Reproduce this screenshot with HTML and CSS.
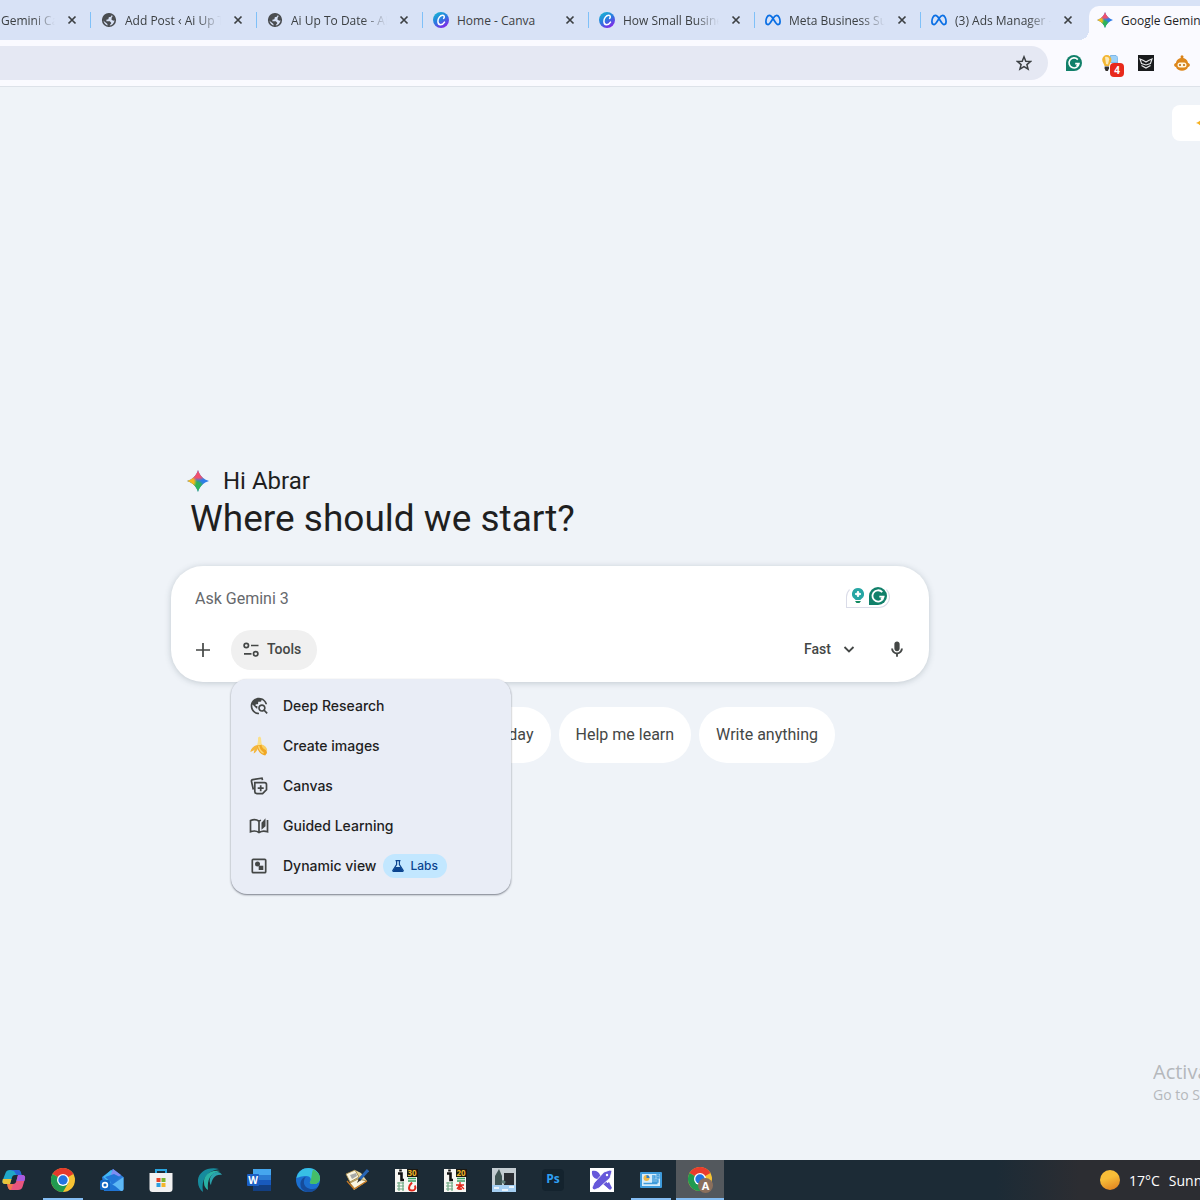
FILE: index.html
```html
<!DOCTYPE html>
<html lang="en">
<head>
    <meta charset="UTF-8">
    <title>Google Gemini</title>
    <link rel="stylesheet" href="styles.css">
</head>
<body>
<!-- shared icons -->
<svg class="sprite" width="0" height="0" aria-hidden="true">
    <defs>
        <linearGradient id="canva-fill" x1="0" y1="0" x2="0.6" y2="1">
            <stop offset="0" stop-color="#15c0cf"/>
            <stop offset="0.55" stop-color="#2a7be0"/>
            <stop offset="1" stop-color="#7d2ae8"/>
        </linearGradient>
        <radialGradient id="spark-red" cx="0.5" cy="0" r="0.5">
            <stop offset="0.7" stop-color="#f0506e"/>
            <stop offset="1" stop-color="#f0506e" stop-opacity="0"/>
        </radialGradient>
        <radialGradient id="spark-yellow" cx="0" cy="0.5" r="0.45">
            <stop offset="0.7" stop-color="#f6b81f"/>
            <stop offset="1" stop-color="#f6b81f" stop-opacity="0"/>
        </radialGradient>
        <radialGradient id="spark-green" cx="0.35" cy="0.9" r="0.5">
            <stop offset="0.7" stop-color="#2fb35a"/>
            <stop offset="1" stop-color="#2fb35a" stop-opacity="0"/>
        </radialGradient>
        <clipPath id="spark-clip">
            <path d="M12 0c1.6 5.800 6.200 10.400 12 12-5.800 1.600-10.400 6.200-12 12-1.600-5.800-6.200-10.400-12-12 5.800-1.600 10.400-6.200 12-12z"/>
        </clipPath>
    </defs>
    <symbol id="close" viewBox="0 0 10 10">
        <path d="M1.5 1.5l7 7M8.500 1.500l-7 7" stroke="#3c4043" stroke-width="1.7" fill="none"/>
    </symbol>
    <symbol id="globe" viewBox="0 0 16 16">
        <circle cx="8" cy="8" r="6.3" fill="#d8e2f6" stroke="#4a4d51" stroke-width="1.6"/>
        <path d="M1.500 8C2 4 5 1.500 9 1.500l1.800 1.500-1 1.800-2 .4-.4 2-2 .6v1.400h3.400l1.600 1.800-1.200 1.400-1 2.600-1.400-.4-.4-2.600-2.400-2z" fill="#4a4d51"/>
        <path d="M11 4.500l2.400-.4 1.200 3.900-2.400.8-1.800-1.400z" fill="#4a4d51"/>
    </symbol>
    <symbol id="canva" viewBox="0 0 16 16">
        <circle cx="8" cy="8" r="8" fill="url(#canva-fill)"/>
        <path d="M10.600 6.400c1-.8 1-3-.8-3.100-2.600-.1-4.900 3-4.900 6 0 2.200 1 3.500 2.600 3.500 1.500 0 3-1 4-2.700" fill="none" stroke="#fff" stroke-width="1.500" stroke-linecap="round"/>
    </symbol>
    <symbol id="meta" viewBox="0 0 16 16">
        <path d="M8 6.500C6.900 4.500 5.700 3.300 4.400 3.300 2.300 3.300.9 6.500.9 9.600c0 1.900.7 3 2 3 1.700 0 2.900-2.500 5.100-6.100 1.100-1.900 2.200-3.200 3.600-3.200 2.100 0 3.500 3.200 3.500 6.300 0 1.900-.7 3-2 3-1.700 0-2.900-2.500-5.100-6.100z" fill="none" stroke="#0a6fe4" stroke-width="1.700"/>
    </symbol>
    <symbol id="spark" viewBox="0 0 24 24">
        <g clip-path="url(#spark-clip)">
            <rect width="24" height="24" fill="#2f7de8"/>
            <rect width="24" height="24" fill="url(#spark-green)"/>
            <rect width="24" height="24" fill="url(#spark-yellow)"/>
            <rect width="24" height="24" fill="url(#spark-red)"/>
        </g>
    </symbol>
    <symbol id="grammarly" viewBox="0 0 16 16">
        <path d="M8 0a8 8 0 1 1 0 16H0V8a8 8 0 0 1 8-8z" fill="#11806a"/>
        <path d="M11.800 4.600A5 5 0 1 0 13 8.600H9.200M13 8.600l-2.400 2.600" fill="none" stroke="#fff" stroke-width="1.600"/>
    </symbol>
</svg>

<header class="browser">
    <nav class="tabs" aria-label="Tabs">
        <div class="tab tab-cut">
            <span class="tab-title">Gemini Canvas</span>
            <button class="tab-close" aria-label="Close tab"><svg><use href="#close"/></svg></button>
        </div>
        <div class="tab">
            <svg class="favicon"><use href="#globe"/></svg>
            <span class="tab-title">Add Post ‹ Ai Up To Date</span>
            <button class="tab-close" aria-label="Close tab"><svg><use href="#close"/></svg></button>
        </div>
        <div class="tab">
            <svg class="favicon"><use href="#globe"/></svg>
            <span class="tab-title">Ai Up To Date - AI News</span>
            <button class="tab-close" aria-label="Close tab"><svg><use href="#close"/></svg></button>
        </div>
        <div class="tab">
            <svg class="favicon"><use href="#canva"/></svg>
            <span class="tab-title tab-title-full">Home - Canva</span>
            <button class="tab-close" aria-label="Close tab"><svg><use href="#close"/></svg></button>
        </div>
        <div class="tab">
            <svg class="favicon"><use href="#canva"/></svg>
            <span class="tab-title">How Small Businesses</span>
            <button class="tab-close" aria-label="Close tab"><svg><use href="#close"/></svg></button>
        </div>
        <div class="tab">
            <svg class="favicon"><use href="#meta"/></svg>
            <span class="tab-title">Meta Business Suite</span>
            <button class="tab-close" aria-label="Close tab"><svg><use href="#close"/></svg></button>
        </div>
        <div class="tab tab-last">
            <svg class="favicon"><use href="#meta"/></svg>
            <span class="tab-title">(3) Ads Manager - Ads</span>
            <button class="tab-close" aria-label="Close tab"><svg><use href="#close"/></svg></button>
        </div>
        <div class="tab-active">
            <svg class="favicon"><use href="#spark"/></svg>
            <span>Google Gemini</span>
        </div>
    </nav>
    <div class="toolbar">
        <div class="address">
            <input class="address-input" type="text" aria-label="Address">
            <button class="icon-btn" aria-label="Bookmark this tab">
                <svg width="16" height="16" viewBox="0 0 16 16"><path d="M8 1.800l1.800 4.400 4.700.3-3.600 3.100 1.200 4.600L8 11.700l-4.100 2.500 1.200-4.600L1.500 6.500l4.700-.3z" fill="none" stroke="#3c4043" stroke-width="1.500"/></svg>
            </button>
        </div>
        <div class="extensions">
            <button class="icon-btn" aria-label="Grammarly"><svg width="16" height="16"><use href="#grammarly"/></svg></button>
            <button class="icon-btn" aria-label="Ideas, 4 new">
                <svg width="16" height="16" viewBox="0 0 16 16">
                    <path d="M8.500.5H14l2 2v5H8.500z" fill="#9dd0f7" stroke="#5ba3e0" stroke-width=".7"/>
                    <path d="M4.800 0a4.600 4.600 0 0 0-4.600 4.700c0 2.700 2 3.800 2.300 6.300h4.600c.3-2.500 2.300-3.600 2.300-6.300A4.600 4.600 0 0 0 4.800 0z" fill="#f3b632"/>
                    <path d="M3 2.200c1.500-.9 4 0 4.200 2L6 9.500 4 9z" fill="#fbe9b8"/>
                    <path d="M2.600 11.500h4.400v2L5.900 16H3.700l-1.100-2.500z" fill="#34322f"/>
                </svg>
                <span class="badge">4</span>
            </button>
            <button class="icon-btn" aria-label="Owl">
                <svg width="16" height="16" viewBox="0 0 16 16">
                    <rect width="16" height="16" fill="#191b1d"/>
                    <path d="M2 4l3.500 1.500L8 7l2.500-1.500L14 4l-1.500 4.500L8 10 3.500 8.500z" fill="none" stroke="#e6e8ea" stroke-width="1.100"/>
                    <path d="M3.500 10.500L8 13l4.500-2.500" fill="none" stroke="#e6e8ea" stroke-width="1.200"/>
                </svg>
            </button>
            <button class="icon-btn" aria-label="Robot">
                <svg width="16" height="16" viewBox="0 0 16 16">
                    <circle cx="8" cy="1.800" r="1.500" fill="#d98218"/>
                    <path d="M2 8C2.500 4.500 5 3 8 3s5.500 1.500 6 5c2.500.5 2.500 3.500 0 4-1.500 5-10.500 5-12 0-2.500-.5-2.500-3.500 0-4z" fill="#dd871c"/>
                    <rect x="3.500" y="7.500" width="9" height="5" rx="2.500" fill="#fff6e0"/>
                    <circle cx="6" cy="10" r="1.100" fill="#c06f10"/><circle cx="10" cy="10" r="1.100" fill="#c06f10"/>
                </svg>
            </button>
        </div>
    </div>
</header>

<main class="page">
    <div class="page-top">
        <a class="upgrade" href="#" aria-label="Upgrade">
            <svg width="14" height="14" viewBox="0 0 24 24"><path d="M12 0c1.600 5.800 6.200 10.400 12 12-5.800 1.600-10.400 6.200-12 12-1.600-5.800-6.200-10.400-12-12 5.800-1.600 10.400-6.200 12-12z" fill="#f6b01e"/></svg>
        </a>
    </div>

    <div class="chat">
        <div class="greeting">
            <svg width="22" height="22"><use href="#spark"/></svg>
            <span>Hi Abrar</span>
        </div>
        <h1 class="title">Where should we start?</h1>

        <form class="prompt">
            <div class="prompt-row">
                <input class="prompt-input" type="text" placeholder="Ask Gemini 3" aria-label="Ask Gemini 3">
                <div class="writing-tools">
                    <svg width="12" height="16" viewBox="0 0 12 16">
                        <path d="M6 0a6 6 0 0 1 3.600 10.800L8.300 12H3.700l-1.300-1.200A6 6 0 0 1 6 0z" fill="#27a6a4"/>
                        <path d="M6 3l.9 2.100L9 6l-2.100.9L6 9l-.9-2.100L3 6l2.100-.9z" fill="#fff" stroke="#fff"/>
                        <path d="M3 13h6l-1.500 2h-3z" fill="#138a60"/>
                    </svg>
                    <svg width="18" height="18"><use href="#grammarly"/></svg>
                </div>
            </div>
            <div class="prompt-row">
                <button type="button" class="round-btn" aria-label="Add files">
                    <svg width="16" height="16" viewBox="0 0 16 16"><path d="M8 1v14M1 8h14" stroke="#444746" stroke-width="1.700"/></svg>
                </button>
                <div class="tools">
                    <button type="button" class="tools-btn" aria-expanded="true">
                        <svg width="16" height="16" viewBox="0 0 16 16" fill="none" stroke="#444746" stroke-width="1.700">
                            <circle cx="3.300" cy="3.500" r="2.200"/><path d="M8 3.500h7.500M1 11.800h7.500"/><circle cx="12.700" cy="11.800" r="2.200"/>
                        </svg>
                        <span class="label">Tools</span>
                    </button>
                    <div class="menu" role="menu">
                        <button type="button" class="menu-item" role="menuitem">
                            <svg width="20" height="20" viewBox="0 0 24 24"><path fill="#444746" d="M19.300 16.900c.4-.7.7-1.500.7-2.400 0-2.500-2-4.500-4.500-4.500S11 12 11 14.500s2 4.500 4.500 4.500c.9 0 1.700-.3 2.400-.7l3.200 3.200 1.400-1.400-3.200-3.200zm-3.800.1c-1.400 0-2.500-1.100-2.500-2.500s1.100-2.500 2.500-2.500 2.500 1.100 2.500 2.500-1.100 2.500-2.500 2.500zM12 20v2C6.480 22 2 17.520 2 12S6.480 2 12 2c4.840 0 8.870 3.440 9.800 8h-2.070c-.64-2.460-2.400-4.470-4.730-5.410V5c0 1.100-.9 2-2 2h-2v2c0 .55-.45 1-1 1H8v2h2v3H9l-4.790-4.790C4.080 10.790 4 11.380 4 12c0 4.410 3.590 8 8 8z"/></svg>
                            <span class="label">Deep Research</span>
                        </button>
                        <button type="button" class="menu-item" role="menuitem">
                            <svg width="20" height="20" viewBox="0 0 20 20">
                                <path d="M9 1.500L11 .5l1 1.500c.2 3 .6 5.500 1 8l-5.500 1c1-3 1.800-6 1.500-9.500z" fill="#fbe08a"/>
                                <path d="M8.200 9C5.500 9.500 2 12 1.300 16c1.700-.4 3-1.200 4.200-2.500L4.600 17.500c2-1 3.400-2.700 4.200-5z" fill="#f4b63c"/>
                                <path d="M8 9.500c0 5 3.500 9 8.200 10l1.800-2.400c0-3.500-2-6.200-5-8.400z" fill="#f0a725"/>
                                <path d="M12.500 8.500c3.200.6 5.300 2.500 5.800 6-2.200-.3-4-1.500-5.500-4z" fill="#f9cf62"/>
                                <path d="M9.600 10c.6 3 2.400 5.600 5 7.200" fill="none" stroke="#fbd873" stroke-width="1.300"/>
                            </svg>
                            <span class="label">Create images</span>
                        </button>
                        <button type="button" class="menu-item" role="menuitem">
                            <svg width="20" height="20" viewBox="0 0 20 20" fill="none" stroke="#444746" stroke-width="1.700">
                                <path d="M5.800 6.700h9.700a2 2 0 0 1 2 2v5l-3.900 3.900H7.800a2 2 0 0 1-2-2zM4.300 13.500L2.500 5.500a1.500 1.500 0 0 1 1.200-1.900l9.300-1.500.5 2M11.700 9.200v6M8.700 12.200h6"/>
                                <path d="M13.500 17.500l4-4v-1" stroke-width="1"/>
                            </svg>
                            <span class="label">Canvas</span>
                        </button>
                        <button type="button" class="menu-item" role="menuitem">
                            <svg width="20" height="20" viewBox="0 0 20 20" fill="none" stroke="#444746" stroke-width="1.700">
                                <path d="M10 16.500V5.200C7.800 3.600 4 3.500 1.500 4.600v11.200c2.500-1 6-1 8.500.7 2.500-1.600 6-1.700 8.500-.7V4M10 5.200c.6-.4 1.200-.7 2-.9"/>
                                <path d="M12.500 6.800l4-4.600v8l-4 3.600z" fill="#444746" stroke="none"/>
                            </svg>
                            <span class="label">Guided Learning</span>
                        </button>
                        <button type="button" class="menu-item" role="menuitem">
                            <svg width="20" height="20" viewBox="0 0 20 20">
                                <rect x="3.300" y="3.300" width="13.400" height="13.400" rx="1" fill="none" stroke="#444746" stroke-width="1.700"/>
                                <circle cx="8.500" cy="8" r="2.500" fill="#444746"/><rect x="9.700" y="9.700" width="4.600" height="4.300" fill="#444746"/>
                            </svg>
                            <span class="label">Dynamic view</span>
                            <span class="labs">
                                <svg width="12" height="12" viewBox="0 0 12 12">
                                    <path d="M3.500.7h5M4.600 1v3.600L.9 10.400c-.3.500 0 .9.500.9h9.200c.5 0 .8-.4.5-.9L7.400 4.600V1" fill="none" stroke="#0b4590" stroke-width="1.200"/>
                                    <path d="M3.300 7h5.400l2.400 4.200H.9z" fill="#0b4590"/>
                                </svg>
                                <span class="label">Labs</span>
                            </span>
                        </button>
                    </div>
                </div>
                <button type="button" class="model-btn">
                    <span class="label">Fast</span>
                    <svg width="12" height="12" viewBox="0 0 12 12"><path d="M1.500 3L6 7.500 10.500 3" fill="none" stroke="#444746" stroke-width="1.800"/></svg>
                </button>
                <button type="button" class="round-btn" aria-label="Use microphone">
                    <svg width="18" height="18" viewBox="0 0 24 24"><path fill="#444746" d="M12 13.500c2 0 3.500-1.500 3.500-3.500V4c0-2-1.500-3.500-3.500-3.500S8.500 2 8.500 4v6c0 2 1.500 3.500 3.500 3.500zm5.300-3.500c0 3-2.400 5.300-5.300 5.300S6.700 13 6.700 10H4.200c0 4 2.800 6.900 6.600 7.500V21h2.400v-3.500c3.800-.6 6.600-3.500 6.600-7.500z"/></svg>
                </button>
            </div>
        </form>

        <div class="chips">
            <button class="chip"><span class="label">Boost my day</span></button>
            <button class="chip"><span class="label">Help me learn</span></button>
            <button class="chip"><span class="label">Write anything</span></button>
        </div>
    </div>

    <div class="watermark">
        <p class="watermark-title">Activate Windows</p>
        <p class="watermark-text">Go to Settings to activate Windows.</p>
    </div>
</main>

<footer class="taskbar">
    <button class="task task-cut" aria-label="Copilot">
        <svg width="24" height="24" viewBox="0 0 24 24">
            <path d="M8 2h8c2 0 2.500 1.500 3 3l.5 2H13c-2 0-2.500 1-3 2.500L8 16H3c-2 0-3-1.500-2.400-3.500L3.500 5C4.200 3 5.500 2 8 2z" fill="#20a7c9"/>
            <path d="M8 2h8c2 0 2.500 1.500 3 3l.5 2h-5L12 3z" fill="#2a62d8"/>
            <path d="M.8 11h8.700L8 16H3c-2 0-3-1.500-2.400-3.500z" fill="#e8c33a"/>
            <path d="M16 22H9c-2 0-2.700-1.500-3.200-3L5.300 16H11c2 0 2.700-1 3.200-2.500L16 7h4c2.400 0 3.500 1.500 3 3.700L20.500 19c-.7 2-2 3-4.500 3z" fill="#e8567f"/>
            <path d="M16 7h4c2.400 0 3.500 1.500 3 3.700L22.300 13H14.400z" fill="#a65be0"/>
            <path d="M5.300 16H11l-2 6c-2 0-2.700-1.500-3.200-3z" fill="#f2794b"/>
        </svg>
    </button>
    <button class="task task-open" aria-label="Chrome">
        <svg width="24" height="24" viewBox="0 0 24 24">
            <circle cx="12" cy="12" r="12" fill="#f6c233"/>
            <path d="M12 12L1.600 6A12 12 0 0 1 22.400 6z" fill="#e43a2c"/>
            <path d="M12 12L1.600 6A12 12 0 0 0 12 24l5.200-9z" fill="#219a50"/>
            <circle cx="12" cy="12" r="6" fill="#fff"/><circle cx="12" cy="12" r="4.700" fill="#2374e1"/>
        </svg>
    </button>
    <button class="task" aria-label="Outlook">
        <svg width="24" height="24" viewBox="0 0 24 24">
            <path d="M2 9L13 1l10.500 8v12a2 2 0 0 1-2 2H4z" fill="#2a7ddb"/>
            <path d="M3 9l8-7 5 3-6 10z" fill="#43b8f3"/><path d="M13 1l8 6-7 6-4-4z" fill="#7f8df2"/>
            <path d="M5 9l9-3 6 3-7 7z" fill="#2277d8"/>
            <path d="M23.500 9L9 19l3 4h9.500a2 2 0 0 0 2-2z" fill="#5db8f5"/>
            <path d="M4 12l11 6 6 5H4z" fill="#1f74d4"/>
            <rect x="0" y="12" width="10" height="10" rx="1.500" fill="#1166c2"/>
            <circle cx="5" cy="17" r="2.400" fill="none" stroke="#fff" stroke-width="1.600"/>
        </svg>
    </button>
    <button class="task" aria-label="Microsoft Store">
        <svg width="24" height="24" viewBox="0 0 24 24">
            <path d="M7 6V2h10v4" fill="none" stroke="#29a4df" stroke-width="2"/>
            <path d="M.5 5h23v16a3 3 0 0 1-3 3h-17a3 3 0 0 1-3-3z" fill="#f1f1f1"/>
            <path d="M7.500 10h4v4h-4z" fill="#e5422b"/><path d="M12.500 10h4v4h-4z" fill="#7cb62f"/>
            <path d="M7.500 15h4v4h-4z" fill="#2b9fe0"/><path d="M12.500 15h4v4h-4z" fill="#f4b62a"/>
        </svg>
    </button>
    <button class="task" aria-label="Wave">
        <svg width="24" height="24" viewBox="0 0 24 24">
            <path d="M21 1C9-2-1 5 0 14c0 4 2 8 5 10C3 12 8 3 21 1z" fill="#168b9d"/>
            <path d="M22 3C12 1 5 8 6 15c0 3 1.500 5.500 4 7C9 12 12 5 22 3z" fill="#29b3a6"/>
            <path d="M24 7C22 3 16 3 13 8c-2 3-1.500 7 0 9 1-6 4-11 11-10z" fill="#2aa2ad"/>
        </svg>
    </button>
    <button class="task" aria-label="Word">
        <svg width="24" height="24" viewBox="0 0 24 24">
            <path d="M6 1h18v6H6z" fill="#45a6ee"/><path d="M6 7h18v5H6z" fill="#2b7cd3"/>
            <path d="M6 12h18v5H6z" fill="#185abd"/><path d="M6 17h18v6H6z" fill="#123f82"/>
            <rect x="0" y="6" width="12" height="12" rx="1" fill="#1b5fc4"/>
            <text x="6" y="16" class="word-mark">W</text>
        </svg>
    </button>
    <button class="task" aria-label="Edge">
        <svg width="24" height="24" viewBox="0 0 24 24">
            <circle cx="12" cy="12" r="12" fill="#1b6fd0"/>
            <path d="M.5 10C2 3 7 0 12.500 0 19 0 24 5 24 10c0 4-3 6.500-7 6-3 0-4-1.500-2.500-3 1-2-.5-5-4-5C6 8 2 9.500.5 10z" fill="#37bfe5"/>
            <path d="M17 1.500c4.500 2 7 5.500 7 8.500 0 4-3 6.500-7 6-3 0-4-1.500-2.500-3 1.500-4 1-8 2.500-11.500z" fill="#45bd68"/>
            <path d="M8 13c-1 5 4 8.500 9 8 1.500 0 3.500-1 4.500-2-3 6-12 7-16 1.500C3 16 5 9.500 10 9c-1.300 1-1.800 2.500-2 4z" fill="#164c9b"/>
        </svg>
    </button>
    <button class="task" aria-label="Notes">
        <svg width="24" height="24" viewBox="0 0 24 24">
            <path d="M1 6l9-4 6 3 6 8-13 9z" fill="#e7d59a"/>
            <path d="M1 6l9-4 4 7-9 5zM5 15l8-4 9 2-12 8z" fill="#faf6e1" stroke="#96793a" stroke-width=".8"/>
            <path d="M5 7l6-2 1 3-5 3z" fill="#a5a8a6"/>
            <path d="M23 2L14 12" stroke="#2765b5" stroke-width="3"/><path d="M14 10l-2 5 4-3z" fill="#36322a"/>
            <path d="M2 13l7 8 13-8" fill="none" stroke="#c67822" stroke-width="1.300"/>
        </svg>
    </button>
    <button class="task" aria-label="InPage 3.0">
        <svg width="24" height="24" viewBox="0 0 24 24">
            <rect x="1" y="1" width="22" height="23" fill="#f7f7f3"/>
            <path d="M4 5.500h3.500V12H10M6.500 1.500v2" stroke="#111" stroke-width="2.600" fill="none"/>
            <path d="M3 15h7M3 18h7M3 21h7M5 14v9M9 14v9" stroke="#70aa85" stroke-width="1.200"/>
            <path d="M14 10.500h8M14 13h8" stroke="#3ba164" stroke-width="1.500"/>
            <path d="M18 14.500c-4 4-4 8 0 8 3 0 4-2 3-5" stroke="#e32519" stroke-width="2" fill="none"/>
            <rect x="13" y="1" width="11" height="8" fill="#1c1811"/>
            <text x="18" y="8" class="page-mark">30</text>
        </svg>
    </button>
    <button class="task" aria-label="InPage 2.0">
        <svg width="24" height="24" viewBox="0 0 24 24">
            <rect x="1" y="1" width="22" height="23" fill="#f7f7f3"/>
            <path d="M4 5.500h3.500V12H10M6.500 1.500v2" stroke="#111" stroke-width="2.600" fill="none"/>
            <path d="M3 15h7M3 18h7M3 21h7M5 14v9M9 14v9" stroke="#70aa85" stroke-width="1.200"/>
            <path d="M14 10.500h8M14 13h8" stroke="#3ba164" stroke-width="1.500"/>
            <path d="M17 14v8M13 17h8M17 17l-3 4M17 17l4 4M15 21h4" stroke="#e32519" stroke-width="1.300" fill="none"/>
            <rect x="13" y="1" width="11" height="8" fill="#1c1811"/>
            <text x="18" y="8" class="page-mark">20</text>
        </svg>
    </button>
    <button class="task" aria-label="Scene">
        <svg width="24" height="24" viewBox="0 0 24 24">
            <rect width="24" height="24" fill="#c4cdd2"/>
            <path d="M3 17V8l4-7 3 7v9z" fill="#3f5453"/><rect x="12" y="5" width="10" height="12" fill="#2a2e33"/>
            <path d="M0 17h24v7H0z" fill="#a5cff2"/><path d="M10 13l3 2" stroke="#5e7c78" stroke-width="3"/>
            <path d="M2 20h5M10 22h6M17 19h5" stroke="#fff" stroke-width="1.500"/>
        </svg>
    </button>
    <button class="task" aria-label="Photoshop"><span class="ps-icon">Ps</span></button>
    <button class="task" aria-label="Designer">
        <svg width="24" height="24" viewBox="0 0 24 24">
            <rect width="24" height="24" fill="#fff"/>
            <path d="M2 3c4-1 7 1 8 4l11 12-2 2L7 11C3 10 1.500 7 2 3z" fill="#6658da"/>
            <path d="M15 17l4-3 3 6-2 2z" fill="#6658da"/>
            <path d="M14 4l6-2 2 1-2 7L9 20l-5 2-2-2 2-5z" fill="#6658da" stroke="#fff" stroke-width=".8"/>
            <circle cx="17" cy="7" r="1.200" fill="#fff"/>
        </svg>
    </button>
    <button class="task task-open" aria-label="Presentation">
        <svg width="24" height="24" viewBox="0 0 24 24">
            <rect x="1" y="4" width="22" height="16" rx="1" fill="#3e9bdc"/><rect x="3" y="6" width="18" height="12" fill="#d7edfb"/>
            <circle cx="7.500" cy="10" r="3" fill="#f0b746"/><path d="M7.500 10V7a3 3 0 0 1 3 3z" fill="#2d7fca"/>
            <path d="M13 8h3v2h-3M13 12h6v2h-6M4.500 15.500h14M18 7h2v3h-2z" stroke="#3e9bdc" stroke-width="1.300" fill="none"/>
        </svg>
    </button>
    <button class="task task-current" aria-label="Chrome, profile A">
        <svg width="26" height="26" viewBox="0 0 26 26">
            <circle cx="13" cy="12" r="12" fill="#f6c233"/>
            <path d="M13 12L2.600 6A12 12 0 0 1 23.400 6z" fill="#ea3c2d"/>
            <path d="M13 12L2.600 6A12 12 0 0 0 13 24l5.200-9z" fill="#219a50"/>
            <circle cx="13" cy="12" r="6" fill="#fff"/><circle cx="13" cy="12" r="4.700" fill="#2374e1"/>
            <circle cx="18.500" cy="18.500" r="7.500" fill="#8b6f5c"/>
            <text x="18.500" y="22.500" class="profile-mark">A</text>
        </svg>
    </button>
    <div class="weather">
        <span class="sun"></span>
        <span>17°C</span>
        <span>Sunny</span>
    </div>
</footer>
</body>
</html>
```
FILE: styles.css
```css
*{
    box-sizing: border-box;
}
body{
    margin: 0;
    min-height: 100vh;
    display: flex;
    flex-direction: column;
    background: #eff3f8;
    color: #1f1f1f;
    font-family: "Open Sans", "Noto Sans", sans-serif;
    overflow-x: hidden;
}
button, input{
    font: inherit;
    color: inherit;
    border: 0;
    padding: 0;
    background: none;
}
svg{
    display: block;
    flex: none;
}
.sprite{
    position: absolute;
}

/* tab strip */
.tabs{
    display: flex;
    height: 40px;
    overflow: hidden;
    background: #d8e2f6;
    font-size: 12px;
    color: #3c4043;
}
.tab{
    flex: 0 0 166px;
    min-width: 0;
    display: flex;
    align-items: center;
    padding: 0 13px 0 10px;
    margin: 12px 0;
    border-right: 1px solid #7fc0f8;
}
.tab-cut{
    flex-basis: 91px;
    padding-left: 1px;
}
.tab-last{
    border-right-color: transparent;
}
.favicon{
    width: 16px;
    height: 16px;
    margin-right: 8px;
}
.tab-title{
    flex: 1;
    min-width: 0;
    overflow: hidden;
    white-space: nowrap;
    -webkit-mask-image: linear-gradient(to right, #000 75%, transparent);
    mask-image: linear-gradient(to right, #000 75%, transparent);
}
.tab-cut .tab-title{
    -webkit-mask-image: linear-gradient(to right, #000 60%, transparent);
    mask-image: linear-gradient(to right, #000 60%, transparent);
}
.tab-title-full{
    -webkit-mask-image: none;
    mask-image: none;
}
.tab-close{
    margin-left: 12px;
}
.tab-close svg{
    width: 10px;
    height: 10px;
}
.tab-active{
    position: relative;
    flex: 1;
    min-width: 0;
    display: flex;
    align-items: center;
    margin-top: 6px;
    margin-left: 2px;
    padding: 0 0 6px 8px;
    border-top-left-radius: 10px;
    background: #fafaff;
    color: #1f1f1f;
    white-space: nowrap;
}
.tab-active::before{
    content: "";
    position: absolute;
    left: -10px;
    bottom: 0;
    width: 10px;
    height: 10px;
    background: radial-gradient(circle at 0 0, transparent 10px, #fafaff 10px);
}

/* address bar */
.toolbar{
    display: flex;
    align-items: center;
    height: 47px;
    padding-right: 10px;
    background: #fafaff;
    border-bottom: 1px solid #dde2e9;
}
.address{
    flex: 1;
    display: flex;
    align-items: center;
    height: 34px;
    padding-right: 16px;
    background: #e5e8f3;
    border-radius: 0 17px 17px 0;
}
.address-input{
    flex: 1;
    height: 34px;
    padding-left: 16px;
    outline: 0;
}
.extensions{
    display: flex;
    gap: 20px;
    margin-left: 18px;
}
.icon-btn{
    position: relative;
}
.badge{
    position: absolute;
    left: 8px;
    top: 8px;
    width: 14px;
    height: 14px;
    border-radius: 4px;
    background: #e8291c;
    color: #fff;
    font-size: 10px;
    line-height: 14px;
    font-weight: bold;
}

/* gemini page */
.page{
    position: relative;
    flex: 1;
    font-family: Roboto, "Open Sans", sans-serif;
}
.page-top{
    display: flex;
    justify-content: flex-end;
    padding-top: 18px;
}
.upgrade{
    display: flex;
    align-items: center;
    width: 28px;
    height: 36px;
    padding-left: 24px;
    overflow: hidden;
    border-radius: 8px 0 0 8px;
    background: #fff;
}
.chat{
    max-width: 858px;
    margin: 0 auto;
    padding: 324px 100px 0 0;
}
.greeting{
    display: flex;
    align-items: center;
    gap: 14px;
    padding-left: 16px;
    font-size: 24px;
    line-height: 32px;
}
.title{
    margin: 0 0 25px;
    padding-left: 19px;
    font-size: 37px;
    line-height: 44px;
    font-weight: 400;
}
.prompt{
    display: flex;
    flex-direction: column;
    gap: 12px;
    padding: 12px;
    border-radius: 32px;
    background: #fff;
    box-shadow: 0 1px 6px rgba(60, 80, 90, 0.25);
}
.prompt-row{
    display: flex;
    align-items: center;
    height: 40px;
}
.prompt-input{
    flex: 1;
    padding-left: 12px;
    font-size: 16px;
    outline: 0;
}
.prompt-input::placeholder{
    color: #66696d;
    opacity: 1;
}
.writing-tools{
    display: flex;
    align-items: center;
    align-self: flex-start;
    gap: 5px;
    height: 22px;
    margin: 8px 27px 0 0;
    padding: 0 2px 2px 5px;
    border: 1px solid #dadce8;
    border-top-color: transparent;
    border-radius: 11px 11px 11px 0;
}
.round-btn{
    display: flex;
    align-items: center;
    justify-content: center;
    width: 40px;
    height: 40px;
}
.label{
    padding-bottom: 2px;
}
.tools{
    position: relative;
    margin-left: 8px;
}
.tools-btn{
    display: flex;
    align-items: center;
    gap: 8px;
    height: 40px;
    padding: 0 16px 0 12px;
    border-radius: 20px;
    background: #f0f0f0;
    color: #444746;
    font-size: 14px;
    font-weight: 500;
}
.model-btn{
    display: flex;
    align-items: center;
    gap: 12px;
    margin-left: auto;
    margin-right: 22px;
    color: #444746;
    font-size: 14px;
    font-weight: 500;
}

/* tools menu */
.menu{
    position: absolute;
    left: 0;
    top: 49px;
    z-index: 2;
    width: 280px;
    padding: 7px 0 8px;
    border-radius: 16px;
    background: #e9edf6;
    box-shadow: 0 1px 2px rgba(40, 45, 60, 0.6);
}
.menu-item{
    display: flex;
    align-items: center;
    width: 100%;
    height: 40px;
    padding-left: 18px;
    color: #1f1f1f;
    font-family: Inter, Roboto, sans-serif;
    font-size: 14px;
    font-weight: 500;
}
.menu-item > svg{
    margin-right: 14px;
}
.labs{
    display: flex;
    align-items: center;
    gap: 6px;
    height: 24px;
    margin-left: 7px;
    padding: 0 9px;
    border-radius: 12px;
    background: #c2e7ff;
    color: #0b4590;
    font-size: 12px;
}

.chips{
    display: flex;
    justify-content: flex-end;
    gap: 8px;
    margin-top: 25px;
    padding-right: 94px;
}
.chip{
    display: flex;
    align-items: center;
    height: 56px;
    padding: 0 17px;
    border-radius: 28px;
    background: #fff;
    color: #444746;
    font-size: 16px;
    white-space: nowrap;
}

/* activation note, runs off the right edge */
.watermark{
    position: absolute;
    right: 0;
    bottom: 54px;
    width: 47px;
    overflow: hidden;
    color: #b5b8bc;
    font-family: "Open Sans", "Noto Sans", sans-serif;
    white-space: nowrap;
}
.watermark p{
    margin: 0;
}
.watermark-title{
    font-size: 20px;
    line-height: 24px;
}
.watermark-text{
    font-size: 14px;
    line-height: 22px;
}

/* taskbar */
.taskbar{
    display: flex;
    gap: 1px;
    height: 40px;
    overflow: hidden;
    background: linear-gradient(to right, #1c2b36 83%, #2c2d32 90%);
    color: #fff;
}
.task{
    position: relative;
    flex: 0 0 48px;
    display: flex;
    align-items: center;
    justify-content: center;
}
.task-cut{
    flex-basis: 38px;
    justify-content: flex-start;
    padding-left: 2px;
}
.task-open::after, .task-current::after{
    content: "";
    position: absolute;
    left: 4px;
    right: 4px;
    bottom: 0;
    height: 2px;
    background: #84bdf3;
}
.task-current{
    background: #53585d;
}
.task-current::after{
    left: 0;
    right: 0;
}
.word-mark, .page-mark, .profile-mark{
    fill: #fff;
    font-size: 10px;
    font-weight: bold;
    text-anchor: middle;
}
.page-mark{
    fill: #f0b429;
    font-size: 8px;
}
.profile-mark{
    font-size: 11px;
}
.ps-icon{
    width: 22px;
    height: 22px;
    border-radius: 4px;
    background: #14232e;
    color: #2f9ff2;
    font-size: 12px;
    line-height: 20px;
    font-weight: bold;
}
.weather{
    flex: none;
    display: flex;
    align-items: center;
    gap: 9px;
    width: 100px;
    margin-left: auto;
    overflow: hidden;
    font-size: 14px;
}
.sun{
    flex: none;
    width: 20px;
    height: 20px;
    border-radius: 50%;
    background: linear-gradient(160deg, #f8bd38 40%, #dd7a1d);
}
```
